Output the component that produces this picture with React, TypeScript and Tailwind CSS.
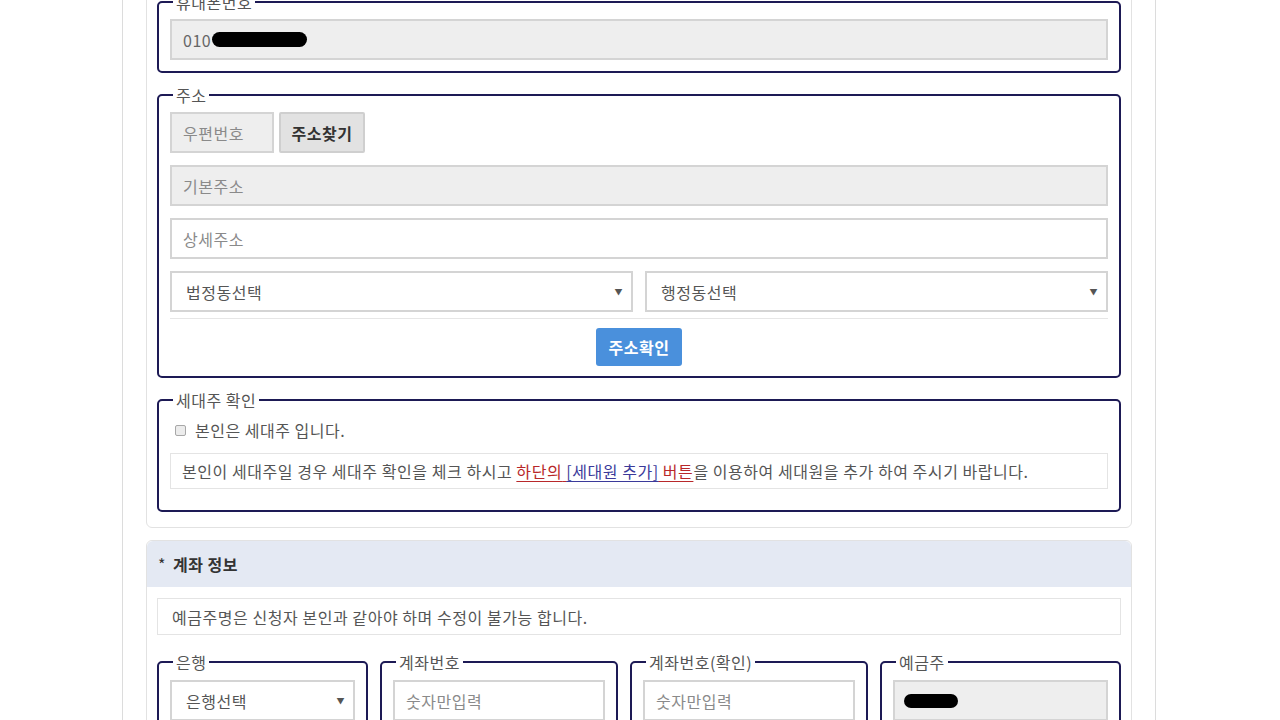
import type { ReactNode } from 'react'

const font = { fontFamily: '"Noto Sans CJK KR", "Noto Sans", "Liberation Sans", sans-serif' }

type BoxProps = {
  legend: string
  className?: string
  children: ReactNode
}

function Box({ legend, className = '', children }: BoxProps) {
  return (
    <fieldset className={`rounded-[5px] border-2 border-[#1d1a55] px-[11px] ${className}`}>
      <legend className="ml-[3px] px-[3px] text-[16px] leading-[22px] tracking-[0.5px] text-[#555]">{legend}</legend>
      {children}
    </fieldset>
  )
}

function TextField({
  value,
  muted = false,
  gray = false,
  children,
}: {
  value?: string
  muted?: boolean
  gray?: boolean
  children?: ReactNode
}) {
  return (
    <div
      className={`flex h-[41px] items-center border-2 border-[#d4d4d4] px-[11px] text-[16px] tracking-[0.5px] ${
        gray ? 'bg-[#eeeeee]' : 'bg-white'
      } ${muted ? 'text-[#8a8a8a]' : 'text-[#666]'}`}
    >
      {value}
      {children}
    </div>
  )
}

function SelectField({ label }: { label: string }) {
  return (
    <div className="flex h-[41px] items-center justify-between border-2 border-[#d4d4d4] bg-white pl-[14px] pr-[8px] text-[16px] tracking-[0.5px] text-[#555]">
      <span>{label}</span>
      <span className="text-[8px] text-[#555]">▼</span>
    </div>
  )
}

function Redacted({ className }: { className: string }) {
  return <span className={`inline-block rounded-full bg-black ${className}`} />
}

export default function App() {
  return (
    <div className="min-h-screen overflow-hidden bg-white" style={font}>
      <div className="ml-[122px] w-[1034px] border-x border-[#dcdcdc] bg-white px-[23px] pb-10">
        {/* 신청자 정보 */}
        <div className="mt-[-20px] rounded-b-[6px] border border-[#e2e2e2] px-[10px] pb-[15px] pt-[10px]">
          <Box legend="휴대폰번호" className="mb-[11px] pb-[11px] pt-[6px]">
            <TextField gray>
              <span>010</span>
              <Redacted className="ml-[1px] h-[15px] w-[95px]" />
            </TextField>
          </Box>

          <Box legend="주소" className="mb-[11px] pb-[10px] pt-[6px]">
            <div className="flex gap-[5px]">
              <div className="w-[104px]">
                <TextField value="우편번호" gray muted />
              </div>
              <button
                type="button"
                className="h-[41px] w-[86px] rounded-[2px] border-2 border-[#cfcfcf] bg-[#e2e2e2] text-[16px] font-bold tracking-[0.5px] text-[#333]"
              >
                주소찾기
              </button>
            </div>
            <div className="mt-[12px]">
              <TextField value="기본주소" gray muted />
            </div>
            <div className="mt-[12px]">
              <TextField value="상세주소" muted />
            </div>
            <div className="mt-[12px] grid grid-cols-2 gap-[12px]">
              <SelectField label="법정동선택" />
              <SelectField label="행정동선택" />
            </div>
            <div className="mt-[6px] border-t border-[#e6e6e6] pt-[9px] text-center">
              <button
                type="button"
                className="h-[38px] w-[86px] rounded-[3px] bg-[#4a90dc] text-[16px] font-bold tracking-[0.5px] text-white"
              >
                주소확인
              </button>
            </div>
          </Box>

          <Box legend="세대주 확인" className="pb-[21px] pt-[8px]">
            <label className="flex items-center gap-[9px] pl-[5px] text-[16px] leading-[22px] tracking-[0.5px] text-[#555]">
              <span className="inline-block h-[11px] w-[11px] rounded-[2px] border border-[#a8a8a8] bg-[#ececec]" />
              본인은 세대주 입니다.
            </label>
            <div className="mt-[12px] flex h-[36px] items-center border border-[#e4e4e4] px-[11px] text-[16px] tracking-[0.55px] text-[#555]">
              <span>
                본인이 세대주일 경우 세대주 확인을 체크 하시고{' '}
                <span className="text-[#b8282a] underline underline-offset-[3px]">
                  하단의{' '}
                  <span className="text-[#3b3a9a] underline">[세대원 추가]</span> 버튼
                </span>
                을 이용하여 세대원을 추가 하여 주시기 바랍니다.
              </span>
            </div>
          </Box>
        </div>

        {/* 계좌 정보 */}
        <div className="mt-[12px] rounded-[6px] border border-[#e2e2e2]">
          <div className="flex h-[46px] items-center rounded-t-[6px] bg-[#e4e9f3] px-[11px] text-[16px] font-bold tracking-[0.5px] text-[#333]">
            <span className="mr-[7px] font-normal">*</span>계좌 정보
          </div>
          <div className="px-[10px] pb-[15px]">
            <div className="mt-[11px] flex h-[37px] items-center border border-[#e4e4e4] px-[14px] text-[16px] tracking-[0.55px] text-[#555]">
              예금주명은 신청자 본인과 같아야 하며 수정이 불가능 합니다.
            </div>
            <div className="mt-[16px] grid grid-cols-[211px_238px_238px_1fr] gap-[12px]">
              <Box legend="은행" className="pb-[11px] pt-[7px]">
                <SelectField label="은행선택" />
              </Box>
              <Box legend="계좌번호" className="pb-[11px] pt-[7px]">
                <TextField value="숫자만입력" muted />
              </Box>
              <Box legend="계좌번호(확인)" className="pb-[11px] pt-[7px]">
                <TextField value="숫자만입력" muted />
              </Box>
              <Box legend="예금주" className="pb-[11px] pt-[7px]">
                <TextField gray>
                  <Redacted className="ml-[-2px] h-[14px] w-[54px]" />
                </TextField>
              </Box>
            </div>
          </div>
        </div>
      </div>
    </div>
  )
}
